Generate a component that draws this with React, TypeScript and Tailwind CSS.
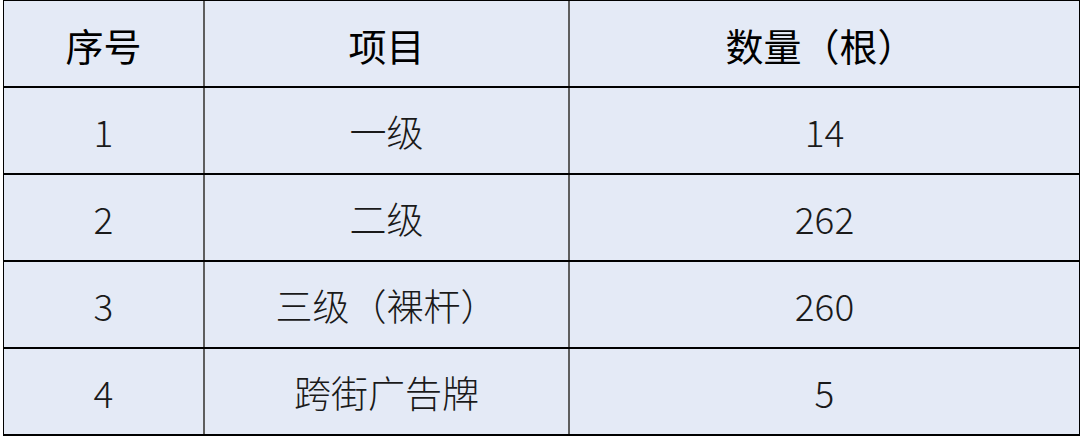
import React from "react";

const rows = [
  ["1", "一级", "14"],
  ["2", "二级", "262"],
  ["3", "三级（裸杆）", "260"],
  ["4", "跨街广告牌", "5"],
];

const font = { fontFamily: '"Noto Sans CJK SC", "Noto Sans", sans-serif' };

export default function App() {
  return (
    <div className="w-[1080px] h-[438px] bg-white" style={font}>
      <div className="ml-[3px] w-[1077px] border-t border-l border-r border-black bg-[#e4eaf6]">
        <div className="grid grid-cols-[201px_365px_1fr] h-[87px] border-b-2 border-black text-[38px] text-black">
          <div className="flex items-center justify-center border-r-2 border-[#5e5e5e] pt-[2px]">序号</div>
          <div className="flex items-center justify-center border-r-2 border-[#5e5e5e] pt-[2px]">项目</div>
          <div className="flex items-center justify-center pt-[2px] pr-[8px]">数量（根）</div>
        </div>
        {rows.map((r) => (
          <div
            key={r[0]}
            className="grid grid-cols-[201px_365px_1fr] h-[87px] border-b-2 border-black text-[37px] font-light text-[#1a1a1a]"
          >
            <div className="flex items-center justify-center border-r-2 border-[#5e5e5e] pt-[2px]">{r[0]}</div>
            <div className="flex items-center justify-center border-r-2 border-[#5e5e5e] pt-[2px]">{r[1]}</div>
            <div className="flex items-center justify-center pt-[2px]">{r[2]}</div>
          </div>
        ))}
      </div>
    </div>
  );
}
